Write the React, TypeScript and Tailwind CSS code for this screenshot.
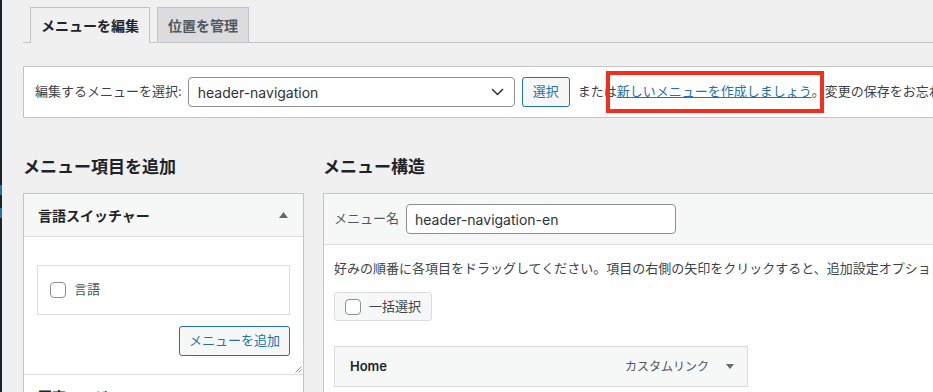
import React from "react";

function Checkbox() {
  return <span className="block w-[16px] h-[16px] flex-none rounded-[4px] border border-[#8c8f94] bg-white" />;
}

export default function App() {
  return (
    <div className="w-[933px] h-[392px] overflow-hidden bg-[#f0f0f1] flex font-[Inter,'Noto_Sans_CJK_JP',sans-serif] text-[13px] text-[#3c434a]">
      <div className="w-[2px] flex-none bg-[#1d2327] flex flex-col">
        <div className="h-[185px]" />
        <div className="h-[10px] bg-[#2271b1]" />
        <div className="h-[13px]" />
        <div className="h-[10px] bg-[#2271b1]" />
      </div>
      <div className="flex-none w-[1100px] pl-[21px]">
        {/* Tabs */}
        <div className="h-[43px] flex items-end pl-[7px] gap-[7px] border-b border-[#c3c4c7]">
          <div className="relative w-[120px] h-[36px] -mb-px border border-b-0 border-[#c3c4c7] bg-[#f0f0f1] flex items-center justify-center text-[14px] font-semibold text-[#1d2327]">
            メニューを編集
          </div>
          <div className="w-[92px] h-[35px] border border-b-0 border-[#c3c4c7] bg-[#dcdcde] flex items-center justify-center text-[14px] font-semibold text-[#50575e]">
            位置を管理
          </div>
        </div>

        {/* Menu select panel */}
        <div className="relative mt-[23px] h-[52px] bg-white border border-[#c3c4c7] flex items-center pl-[11px] whitespace-nowrap">
          <span>編集するメニューを選択:</span>
          <div className="ml-[6px] w-[327px] h-[30px] rounded-[4px] border border-[#8c8f94] bg-white flex items-center justify-between pl-[9px] pr-[10px] text-[14px] text-[#2c3338]">
            <span>header-navigation</span>
            <svg width="13" height="8" viewBox="0 0 13 8" fill="none">
              <path d="M1 1l5.5 5.5L12 1" stroke="#2c3338" strokeWidth="1.5" />
            </svg>
          </div>
          <div className="ml-[7px] w-[48px] h-[30px] rounded-[3px] border border-[#2271b1] bg-[#f6f7f7] flex items-center justify-center text-[#2271b1]">
            選択
          </div>
          <span className="ml-[8px]">または</span>
          <a className="text-[#2271b1] underline">新しいメニューを作成しましょう</a>
          <span>。変更の保存をお忘れなく！</span>
          <div className="absolute left-[582px] top-[4px] w-[218px] h-[42px] border-4 border-[#f42d1c]" />
        </div>

        {/* Columns */}
        <div className="pt-[37px] flex items-start">
          {/* Left column */}
          <div className="w-[281px] flex-none">
            <h2 className="h-[24px] leading-[24px] text-[17px] font-semibold text-[#1d2327] mb-[14px]">メニュー項目を追加</h2>
            <div className="border border-[#c3c4c7] bg-white">
              <div className="h-[43px] bg-[#f6f7f7] border-b border-[#dcdcde] flex items-center justify-between pl-[14px] pr-[15px]">
                <span className="text-[14px] font-semibold text-[#1d2327]">言語スイッチャー</span>
                <svg width="9" height="6" viewBox="0 0 9 6">
                  <path d="M4.5 0L9 6H0z" fill="#646970" />
                </svg>
              </div>
              <div className="relative pt-[28px] px-[13px] pb-[18px] flex flex-col">
                <div className="h-[50px] border border-[#dcdcde] flex items-center pl-[12px] gap-[8px] text-[#50575e]">
                  <Checkbox />
                  <span>言語</span>
                </div>
                <div className="mt-[11px] self-end w-[111px] h-[30px] rounded-[3px] border border-[#2271b1] bg-[#f6f7f7] flex items-center justify-center text-[#2271b1]">
                  メニューを追加
                </div>
                <svg className="absolute right-[1px] bottom-[1px]" width="7" height="7" viewBox="0 0 7 7">
                  <path d="M0.5 6.5L6.5 0.5M3.5 6.5L6.5 3.5" stroke="#8c8f94" strokeWidth="1" />
                </svg>
              </div>
              <div className="h-[43px] border-t border-[#dcdcde] bg-white flex items-center pl-[14px]">
                <span className="text-[14px] font-semibold text-[#1d2327]">固定ページ</span>
              </div>
            </div>
          </div>

          {/* Right column */}
          <div className="ml-[19px] w-[700px] flex-none">
            <h2 className="h-[24px] leading-[24px] text-[17px] font-semibold text-[#1d2327] mb-[14px]">メニュー構造</h2>
            <div className="border border-[#c3c4c7] bg-white h-[300px]">
              <div className="h-[51px] bg-[#f6f7f7] border-b border-[#dcdcde] flex items-center pl-[10px]">
                <span className="text-[#50575e]">メニュー名</span>
                <div className="ml-[7px] w-[270px] h-[30px] rounded-[4px] border border-[#8c8f94] bg-white flex items-center pl-[8px] text-[14px] text-[#2c3338]">
                  header-navigation-en
                </div>
              </div>
              <div className="pt-[13px] pl-[10px]">
                <p className="leading-[20px] whitespace-nowrap">
                  好みの順番に各項目をドラッグしてください。項目の右側の矢印をクリックすると、追加設定オプションが表示されます。
                </p>
                <div className="mt-[14px] w-[98px] h-[29px] rounded-[3px] border border-[#dcdcde] bg-[#f6f7f7] flex items-center pl-[10px] gap-[8px]">
                  <Checkbox />
                  <span>一括選択</span>
                </div>
                <div className="mt-[25px] w-[414px] h-[41px] border border-[#dcdcde] bg-[#f6f7f7] flex items-center justify-between pl-[15px] pr-[13px]">
                  <span className="font-semibold text-[#1d2327]">Home</span>
                  <div className="flex items-center gap-[17px]">
                    <span className="text-[12px] text-[#50575e]">カスタムリンク</span>
                    <svg width="8" height="5" viewBox="0 0 8 5">
                      <path d="M0 0H8L4 5z" fill="#646970" />
                    </svg>
                  </div>
                </div>
              </div>
            </div>
          </div>
        </div>
      </div>
    </div>
  );
}
